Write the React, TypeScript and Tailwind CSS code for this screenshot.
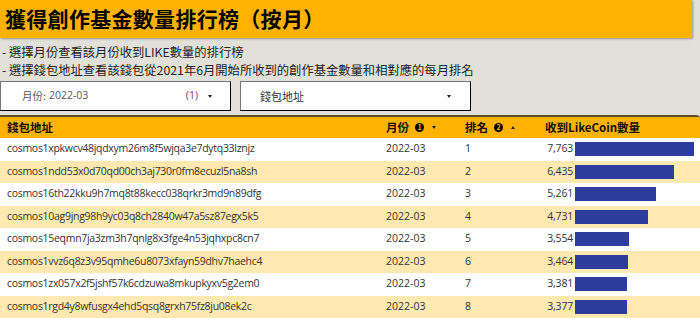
import React from "react";

const rows = [
  ["cosmos1xpkwcv48jqdxym26m8f5wjqa3e7dytq33lznjz", "1", 7763],
  ["cosmos1ndd53x0d70qd00ch3aj730r0fm8ecuzl5na8sh", "2", 6435],
  ["cosmos16th22kku9h7mq8t88kecc038qrkr3md9n89dfg", "3", 5261],
  ["cosmos10ag9jng98h9yc03q8ch2840w47a5sz87egx5k5", "4", 4731],
  ["cosmos15eqmn7ja3zm3h7qnlg8x3fge4n53jqhxpc8cn7", "5", 3554],
  ["cosmos1vvz6q8z3v95qmhe6u8073xfayn59dhv7haehc4", "6", 3464],
  ["cosmos1zx057x2f5jshf57k6cdzuwa8mkupkyxv5g2em0", "7", 3381],
  ["cosmos1rgd4y8wfusgx4ehd5qsq8grxh75fz8ju08ek2c", "8", 3377],
] as const;

const MAX = 7763;
const BARMAX = 119;

function Circ({ n }: { n: string }) {
  return (
    <span className="inline-flex items-center justify-center w-[9px] h-[9px] rounded-full bg-black text-[#FFB300] text-[7px] font-bold leading-none ml-[6px]">
      {n}
    </span>
  );
}

function Down({ cls = "" }: { cls?: string }) {
  return <span className={`inline-block w-0 h-0 border-x-[2.5px] border-x-transparent border-t-[3px] border-t-[#222] ${cls}`} />;
}
function Up({ cls = "" }: { cls?: string }) {
  return <span className={`inline-block w-0 h-0 border-x-[2.5px] border-x-transparent border-b-[3px] border-b-[#222] ${cls}`} />;
}

export default function App() {
  return (
    <div
      className="w-[700px] h-[318px] overflow-hidden bg-[#E2E1D9] text-black"
      style={{ fontFamily: '"Open Sans", "Noto Sans CJK TC", sans-serif' }}
    >
      <div className="w-[692px] h-[38px] bg-[#FFB300] shadow-[1px_1px_2px_rgba(0,0,0,0.35)] flex items-center pl-[5px]">
        <span
          className="text-[21px] font-bold tracking-[0.3px]"
          style={{ fontFamily: '"Noto Sans CJK TC", sans-serif' }}
        >
          獲得創作基金數量排行榜（按月）
        </span>
      </div>
      <div
        className="pl-[2px] pt-[5px] text-[12.3px] leading-[18px] text-[#222]"
        style={{ fontFamily: '"Noto Sans CJK TC", sans-serif' }}
      >
        <div>- 選擇月份查看該月份收到LIKE數量的排行榜</div>
        <div>- 選擇錢包地址查看該錢包從2021年6月開始所收到的創作基金數量和相對應的每月排名</div>
      </div>
      <div className="flex gap-[9px] mt-[2px] h-[30px]">
        <div className="w-[231px] bg-white border border-black border-t-[#777] border-l-[#777] flex items-center pl-[21px] pr-[18px] text-[10.5px] text-[#555]">
          <span style={{ fontFamily: '"Noto Sans CJK TC", sans-serif' }}>月份:</span>
          <span className="ml-[3px]">2022-03</span>
          <span className="ml-auto">(1)</span>
          <Down cls="ml-[10px]" />
        </div>
        <div className="w-[231px] bg-white border border-black border-t-[#777] border-l-[#777] flex items-center pl-[19px] pr-[19px] text-[11px] text-[#333]">
          <span style={{ fontFamily: '"Noto Sans CJK TC", sans-serif' }}>錢包地址</span>
          <Down cls="ml-auto" />
        </div>
      </div>
      <div className="mt-[4px] w-[700px] border-t-2 border-[#5a4a20] rounded-tr-[4px] overflow-hidden">
        <div
          className="h-[21px] bg-[#FFB300] flex items-center text-[11.5px] font-bold text-[#111]"
          style={{ fontFamily: '"Noto Sans CJK TC", "Open Sans", sans-serif' }}
        >
          <div className="w-[386px] pl-[7px]">錢包地址</div>
          <div className="w-[79px] flex items-center">
            月份<Circ n="1" />
            <Down cls="ml-[8px]" />
          </div>
          <div className="w-[80px] flex items-center">
            排名<Circ n="2" />
            <Up cls="ml-[8px]" />
          </div>
          <div>收到LikeCoin數量</div>
        </div>
        {rows.map(([addr, rank, val], i) => (
          <div
            key={addr}
            className={`h-[22.5px] flex items-center text-[10.5px] text-[#333] ${
              i % 2 === 0 ? "bg-white" : "bg-[#FFE9B0]"
            }`}
          >
            <div className="w-[386px] pl-[7px] tracking-[-0.3px]">{addr}</div>
            <div className="w-[79px]">2022-03</div>
            <div className="w-[80px]">{rank}</div>
            <div className="w-[28px] text-right tracking-[-0.2px]">{val.toLocaleString("en-US")}</div>
            <div className="ml-[2px] h-[14px] bg-[#2E3C9E]" style={{ width: (val / MAX) * BARMAX }} />
          </div>
        ))}
      </div>
    </div>
  );
}
